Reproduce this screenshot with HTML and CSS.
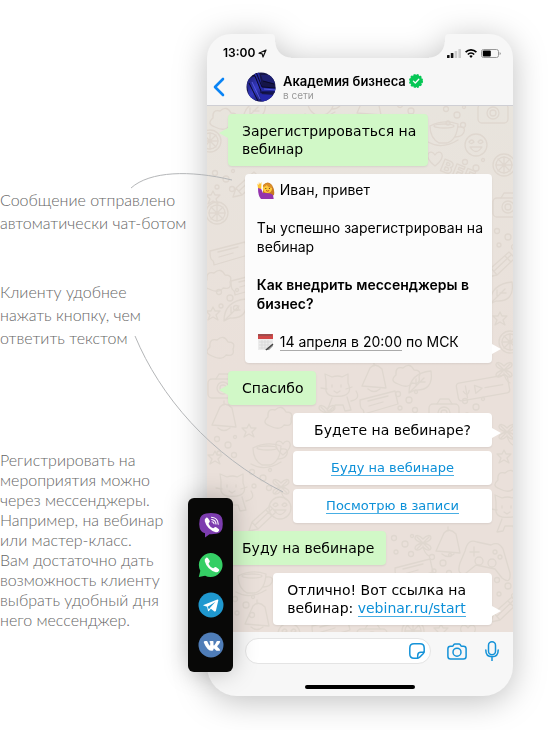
FILE: index.html
```html
<!DOCTYPE html>
<html lang="ru">
<head>
<meta charset="utf-8">
<meta name="viewport" content="width=device-width, initial-scale=1">
<title>Академия бизнеса</title>
<link rel="stylesheet" href="styles.css">
</head>
<body>
<main class="stage">
  <section class="notes">
    <p class="note">Сообщение отправлено<br>автоматически чат-ботом</p>
    <p class="note">Клиенту удобнее<br>нажать кнопку, чем<br>ответить текстом</p>
    <p class="note note-long">Регистрировать на<br>мероприятия можно<br>через мессенджеры.<br>Например, на вебинар<br>или мастер-класс.<br>Вам достаточно дать<br>возможность клиенту<br>выбрать удобный дня<br>него мессенджер.</p>
  </section>

  <div class="phone-wrap">
  <section class="phone">
    <div class="status">
      <div class="ear ear-left">
        <span class="time">13:00</span>
        <svg width="9" height="9" viewBox="0 0 9 9"><path d="M8 1 1 4.2l3.2.6L5 8z" fill="none" stroke="#111" stroke-width="1.2" stroke-linejoin="round"/></svg>
      </div>
      <div class="ear ear-right">
        <svg width="14" height="9" viewBox="0 0 14 9"><rect y="6" width="2.6" height="3" rx=".6" fill="#111"/><rect x="3.8" y="4" width="2.6" height="5" rx=".6" fill="#111"/><rect x="7.6" y="2" width="2.6" height="7" rx=".6" fill="#ccc"/><rect x="11.4" width="2.6" height="9" rx=".6" fill="#ccc"/></svg>
        <svg width="12" height="9" viewBox="0 0 12 9" fill="none" stroke="#000" stroke-width="1.7"><path d="M.6 3.2a7.6 7.6 0 0 1 10.8 0M2.8 5.5a4.6 4.6 0 0 1 6.4 0"/><path d="M6 8.9 4.3 7.1a2.4 2.4 0 0 1 3.4 0z" fill="#000" stroke="none"/></svg>
        <svg width="20" height="9" viewBox="0 0 20 9"><rect x=".5" y=".5" width="17" height="8" rx="2" fill="none" stroke="#999"/><rect x="1.8" y="1.6" width="8" height="5.8" rx="1" fill="#000"/><path d="M18.6 3v3q1.2-.5 1.2-1.5T18.6 3" fill="#999"/></svg>
      </div>
    </div>

    <header class="head">
      <button class="plain back" aria-label="Назад"><svg width="12" height="20" viewBox="0 0 12 20"><path d="m10 2-8 8 8 8" fill="none" stroke="#0a84f5" stroke-width="2.6" stroke-linecap="round" stroke-linejoin="round"/></svg></button>
      <svg class="avatar" width="30" height="30" viewBox="0 0 30 30">
        <defs><clipPath id="av"><circle cx="15" cy="15" r="14.5"/></clipPath><linearGradient id="blue" x1="0" y1="0" x2="1" y2="1"><stop offset="0" stop-color="#1a1a66"/><stop offset=".5" stop-color="#3438c0"/><stop offset="1" stop-color="#111150"/></linearGradient></defs>
        <g clip-path="url(#av)"><rect width="30" height="30" fill="#151548"/><path d="M0 8 9 4l10 26H4z" fill="url(#blue)"/><path d="m8 1 5-1 3 15 14 1v5l-15-1z" fill="#2529a0"/><path d="M15 3h15v9l-13-3z" fill="#1d1f70"/><path d="m13 22 17 1v4l-14 3z" fill="#2427a8"/><path d="m2 2 7 2 6 15M10 0l6 15 14 1M14 20h16M17 9l11 3M3 11l9 18" fill="none" stroke="#090927"/><path d="m6 10 8 17M18 17l12 1" stroke="#5158da" fill="none"/></g>
      </svg>
      <div class="who">
        <h1 class="name">Академия бизнеса
          <svg width="14" height="14" viewBox="0 0 14 14"><circle cx="7" cy="7" r="6.2" fill="#06c755"/><circle cx="7" cy="7" r="6.2" fill="none" stroke="#06c755" stroke-width="1.6" stroke-dasharray="2 1.25"/><path d="m4.4 7.1 1.9 1.9 3.5-3.8" fill="none" stroke="#fff" stroke-width="1.3" stroke-linecap="round" stroke-linejoin="round"/></svg>
        </h1>
        <p class="online">в сети</p>
      </div>
    </header>

    <div class="chat">
      <svg class="doodles" viewBox="0 0 306 526" preserveAspectRatio="xMidYMid slice" aria-hidden="true">
        <defs>
          <g id="cup"><path d="M0 4q14-7 28-2q-1 16-11 19H9Q0 16 0 4M28 5q8-1 6 5-2 5-9 5M-2 20q14 8 30-2"/><ellipse cx="14" cy="4" rx="10" ry="2"/></g>
          <g id="face"><circle cx="11" cy="11" r="11"/><path d="M5 13q6 9 12 0zM4 8q3-4 5 0-3 3-5 0M13 8q3-4 5 0-3 3-5 0"/></g>
          <path id="star" d="m6 0 2 4 5 0-4 4 2 5-5-3-5 3 2-5-4-4h5z"/>
          <path id="heart" d="M8 14C-6 3 4-4 8 3c4-7 14 0 0 11z"/>
          <path id="clover" d="M13 13C0 11 5 0 13 9c8-9 13 2 0 4 13 2 8 12 0 4-8 8-13-2 0-4m0 3q1 7 6 10M7 7l12 12M19 7 7 19"/>
          <g id="cat"><path d="M2 4 1-3l7 3q6-2 10 0l6-3v9q5 11-6 13-14 2-16-5zM8 21l-5 13 6-1 2-5 8 0 2 6 6-1-4-13M27 24q10-2 5-10"/><path d="M8 8v2m9-2v2m-7 4 3 2 3-2M-3 11l6 1m19 0 6-2"/></g>
          <path id="cloud" d="M5 18Q-4 15 3 9 2 0 10 2q7-6 11 2 8 0 5 7 2 8-7 6-4 6-14 1z"/>
          <g id="pencil"><path d="m0 20 3-9L21-5l6 6L9 18zM3 11l6 7M17-1l6 6M6 14 23-2"/></g>
          <g id="pad"><path d="M3 10Q6-3 15 1l14 3q8-4 12 4l7 24q1 12-8 5l-7-9-19-4-10 8q-10 3-6-10zM12 6v9m-4-4h9"/><circle cx="33" cy="11" r="2"/><circle cx="38" cy="16" r="2"/><circle cx="17" cy="20" r="4"/><circle cx="30" cy="22" r="4"/></g>
          <g id="ticket"><path d="m0 5 35-9 3 13L4 19q0-4-2-5t-2-9zM8 6l20-5M9 11l14-4"/></g>
          <g id="wheel"><circle cx="11" cy="11" r="11"/><circle cx="11" cy="11" r="8"/><path d="M11 3v16M3 11h16M5 5l12 12M17 5 5 17"/></g>
          <g id="camera"><rect x="0" y="4" width="30" height="19" rx="4"/><path d="m8 4 3-5h9l3 5"/><circle cx="15" cy="13" r="6"/><circle cx="15" cy="13" r="3"/></g>
          <path id="leaf" d="M0 22Q0 2 22 0q3 20-16 19zM0 22 15 7m-8 7V8m3 3h6"/>
          <g id="dots"><circle cx="3" cy="3" r="2.5"/><circle cx="14" cy="9" r="3"/><circle cx="5" cy="17" r="2"/><circle cx="21" cy="1" r="1.5"/><circle cx="20" cy="19" r="2.5"/></g>
          <g id="bell"><path d="m0 22 8-18q5-6 12 1l4 19zM12 2V-2m-6 27q6 5 12 0"/></g>
          <g id="voice"><rect width="52" height="18" rx="3"/><path d="m18 5 7 4-7 4zM28 9h18M9 4v7M6 9q3 7 6 0M9 13v3"/></g>
        </defs>
        <g class="ink">
          <use href="#wheel" x="-8" y="24"/><use href="#cloud" x="3" y="3"/><use href="#leaf" x="36" y="-6"/><use href="#cup" x="100" y="-12"/><use href="#bell" x="150" y="-15"/><use href="#dots" x="190" y="-4"/>
          <use href="#cup" x="223" y="16"/><use href="#face" x="258" y="28"/><use href="#camera" x="271" y="-6"/><use href="#heart" x="220" y="46"/><text x="232" y="64" transform="rotate(22 232 64)">BFF</text><use href="#dots" x="236" y="0"/><use href="#wheel" x="286" y="48"/><use href="#dots" x="255" y="53"/>
          <use href="#star" x="0" y="85"/><use href="#dots" x="5" y="64"/><use href="#pencil" x="26" y="71"/><use href="#wheel" x="-1" y="96"/><use href="#ticket" x="3" y="140"/><use href="#cloud" x="-3" y="165"/><use href="#ticket" x="24" y="170"/><use href="#star" x="0" y="201"/><use href="#leaf" x="17" y="193"/><use href="#dots" x="9" y="183"/><use href="#cloud" x="0" y="232"/><use href="#camera" x="1" y="269"/><use href="#bell" x="5" y="297"/><use href="#star" x="36" y="318"/><use href="#dots" x="7" y="330"/>
          <use href="#camera" x="286" y="88"/><use href="#dots" x="287" y="122"/><use href="#pencil" x="281" y="151"/><use href="#leaf" x="283" y="176"/><use href="#star" x="287" y="206"/><use href="#wheel" x="292" y="225"/><use href="#clover" x="284" y="251"/>
          <use href="#cat" x="117" y="271"/><use href="#clover" x="107" y="294"/><use href="#bell" x="155" y="258"/><use href="#cloud" x="186" y="260"/><use href="#leaf" x="202" y="265"/><use href="#voice" x="250" y="273" transform="rotate(-10 276 282)"/><use href="#ticket" x="153" y="289"/><use href="#camera" x="222" y="294"/><use href="#dots" x="255" y="292"/><use href="#dots" x="188" y="285"/>
          <use href="#cloud" x="58" y="302"/><use href="#cup" x="46" y="338"/><use href="#heart" x="68" y="335"/><use href="#star" x="2" y="345"/><use href="#cat" x="12" y="371"/><use href="#pencil" x="42" y="405"/><use href="#clover" x="61" y="368"/><use href="#dots" x="42" y="363"/><use href="#face" x="62" y="391"/>
          <use href="#clover" x="287" y="313"/><use href="#star" x="291" y="344"/><use href="#cloud" x="288" y="365"/><use href="#cat" x="287" y="392"/><use href="#pad" x="255" y="435"/><use href="#clover" x="203" y="424"/><use href="#bell" x="229" y="423"/><use href="#dots" x="184" y="429"/><use href="#ticket" x="188" y="457"/><use href="#dots" x="222" y="448"/>
          <use href="#cup" x="31" y="466"/><use href="#bell" x="38" y="496"/><use href="#dots" x="25" y="490"/><use href="#face" x="71" y="517"/><use href="#ticket" x="105" y="515"/><use href="#camera" x="150" y="519"/><use href="#wheel" x="195" y="514"/><use href="#star" x="228" y="518"/><use href="#pencil" x="284" y="496"/><use href="#dots" x="287" y="471"/><use href="#heart" x="253" y="519"/>
        </g>
      </svg>

      <p class="bubble sent">Зарегистрироваться на<br>вебинар</p>

      <div class="bubble got invite">
        <p><svg class="emoji" width="18" height="18" viewBox="0 0 18 18"><path d="M6 4Q11-1 15 4q3 5 2 10l-4 2-7-3z" fill="#c87922"/><circle cx="10.5" cy="7.5" r="4.6" fill="#ffc93b"/><path d="M5.8 6Q8 1 12 2.5q3 1 3.3 4.5-4 0-5.5-3Q8.5 6 5.800 6" fill="#dc8e28"/><circle cx="8.800" cy="7.500" r=".6" fill="#563414"/><circle cx="12.400" cy="7.500" r=".6" fill="#563414"/><path d="M9 9.500q1.700 1.300 3.200 0" fill="none" stroke="#a33b18" stroke-width=".8"/><path d="M1 7q3-1 3.200 1L6 12q8-.5 10 2l.7 4H4Q1 15 1 7" fill="#9433ad"/><path d="m1 7-.7-4.500L1.700 4 1.900.8l1 2.500L4.400 1v3.500L4.200 8z" fill="#ffc232"/></svg>Иван, привет</p>
        <p>Ты успешно зарегистрирован на<br>вебинар</p>
        <p><strong>Как внедрить мессенджеры в<br>бизнес?</strong></p>
        <p><svg class="emoji" width="18" height="18" viewBox="0 0 18 18"><path d="M1 3h15v10l-4 4H1z" fill="#ececec"/><path d="M1 1h15v5H1z" fill="#d14747"/><path d="M2 1v2m2-2v2m2-2v2m2-2v2m2-2v2m2-2v2m2-2v2" stroke="#555" stroke-width=".8"/><path d="M2 9h13M2 12h12M2 15h9M5 7v9m3-9v9m3-9v8" stroke="#d6d6d6" stroke-width=".7"/><path d="m8 17 8-6v2l-4 4z" fill="#999"/><path d="m9 17 7-6" stroke="#444" stroke-width="1.300"/></svg><span class="date">14 апреля в 20:00</span> по МСК</p>
      </div>

      <p class="bubble sent">Спасибо</p>

      <div class="choices">
        <p class="bubble got ask">Будете на вебинаре?</p>
        <a class="bubble choice" href="#yes"><span>Буду на вебинаре</span></a>
        <a class="bubble choice" href="#later"><span>Посмотрю в записи</span></a>
      </div>

      <p class="bubble sent">Буду на вебинаре</p>
      <p class="bubble got last">Отлично! Вот ссылка на<br>вебинар: <a class="link" href="#start">vebinar.ru/start</a></p>
    </div>

    <footer class="foot">
      <div class="tools">
        <div class="field">
          <input class="text" type="text" aria-label="Сообщение">
          <button class="plain" aria-label="Стикеры"><svg width="16" height="16" viewBox="0 0 16 16" class="line"><path d="M15.200 8.500V5Q15.200.800 11 .800H5Q.800.800.800 5v6q0 4.200 4.200 4.200h3.500q1.200 0 2.100-.9l3.500-3.600q.9-1 .9-2.200z"/><path d="M8.700 15v-2.600q0-3.200 3.200-3.200H15"/></svg></button>
        </div>
        <button class="plain" aria-label="Камера"><svg width="20" height="17" viewBox="0 0 20 17" class="line"><path d="M3.500 3.200h1.700q.7 0 1-.6l.6-1Q7.200.900 8 .900h4q.8 0 1.200.7l.6 1q.3.600 1 .600h1.700q2.600 0 2.600 2.600v7.400q0 2.800-2.600 2.800h-13Q.900 16 .900 13.200V5.800q0-2.600 2.600-2.600z"/><circle cx="10" cy="9.200" r="4"/></svg></button>
        <button class="plain" aria-label="Голосовое сообщение"><svg width="14" height="20" viewBox="0 0 14 20" class="line"><rect x="3.500" y=".8" width="7" height="13" rx="3.500"/><path d="M.800 9q0 6.800 6.200 6.800T13.200 9M7 16v3.800"/></svg></button>
      </div>
      <div class="home"></div>
    </footer>
  </section>

  <nav class="apps" aria-label="Мессенджеры">
    <a href="#viber" aria-label="Viber"><svg width="26" height="26" viewBox="0 0 26 26"><path d="M8 1.500Q13 .300 18 1.500q5.500 1 6.400 6 .8 4.500 0 8.500-1 5-6.400 5.800-3 .6-6.500.400L7 25.500v-4.200Q2.500 20 1.700 16q-.9-4.500 0-8.500Q2.700 2.500 8 1.500z" fill="#7d3daf"/><path id="tube" d="M8.200 5.700q1-.6 1.800.500l1.700 2.500q.5 1-.4 1.800-1 .8-.5 1.800 1.200 2.600 3.800 3.800.9.400 1.700-.5.800-1.100 1.900-.4l2.400 1.700q1 .8.400 1.800-1.200 2-3.200 1.600Q9 17.500 6.800 9.300q-.6-2.200 1.400-3.600z" fill="#fff"/><path d="M13.500 5.200q6.500.500 6.700 7M13.700 7.500q4 .500 4.300 4.500M14 9.700q1.800.1 2 2" fill="none" stroke="#fff" stroke-width="1.100" stroke-linecap="round"/></svg></a>
    <a href="#whatsapp" aria-label="WhatsApp"><svg width="26" height="26" viewBox="0 0 26 26"><path d="M12.500 1a12 12 0 1 1-5.400 22.700L.8 25l1.500-6.300A12 12 0 0 1 12.500 1z" fill="#35cf65"/><use href="#tube"/></svg></a>
    <a href="#telegram" aria-label="Telegram"><svg width="26" height="26" viewBox="0 0 26 26"><circle cx="13" cy="13" r="12.500" fill="#1f98cf"/><path d="m5.500 13 13.800-5.400q1.200-.3 1 1l-2.400 10.200q-.4 1.200-1.500.6l-3.500-2.600-2 2.300q-.8.600-1-.5l-.8-3.900-3.700-1.100q-.6-.3.100-.6z" fill="#fff"/><path d="m9.700 14.800 7.800-5-5.200 5.800-1.400 2z" fill="#1f98cf"/></svg></a>
    <a href="#vk" aria-label="ВКонтакте"><svg width="26" height="26" viewBox="0 0 26 26"><circle cx="13" cy="13" r="12.500" fill="#4f7db8"/><path d="M6.500 9h2.300q.4 0 .6.600.9 2.600 2.200 4 .5.400.6-.3V11q0-.8-.9-1.100.3-.9 1.200-.9h2.300q.7 0 .7.800v3.300q.2.700.8.100 1.200-1.400 2.100-3.500.3-.7.900-.7h2.200q.9 0 .6.900-.8 1.800-2.600 3.900-.5.700 0 1.200 1.900 1.600 2.500 2.700.4.900-.6 1.100h-2.300q-.6 0-1-.4l-1.700-1.600q-.8-.6-.9.300 0 1.700-1.200 1.700-5.100.2-8.500-8.400-.3-.9.700-1.100z" fill="#fff"/></svg></a>
  </nav>
  </div>

  <svg class="pointers" viewBox="0 0 548 731" preserveAspectRatio="xMinYMin meet" aria-hidden="true"><path d="M131 188C150 171 190 170 232 180M135 336C160 396 210 455 283 492"/></svg>
</main>
</body>
</html>
```
FILE: styles.css
```css
* { box-sizing: border-box; }

body {
  margin: 0;
  background: #fff;
  color: #000;
  font-family: "DejaVu Sans", sans-serif;
  font-size: 14px;
  line-height: 18px;
}

p, h1 { margin: 0; }

.stage {
  position: relative;
  display: grid;
  grid-template-columns: minmax(0, 207fr) minmax(0, 306fr) minmax(0, 35fr);
  padding: 34px 0;
  overflow: hidden;
}

.notes {
  display: flex;
  flex-direction: column;
  gap: 46px;
  padding-top: 154px;
  color: #666;
  font-family: Lato, "Open Sans", sans-serif;
  font-size: 16px;
  font-weight: 300;
  line-height: 23px;
  white-space: nowrap;
}

.note-long {
  margin-top: 55px;
  line-height: 20px;
}

.phone-wrap { position: relative; }

.phone { filter: drop-shadow(0 5px 16px rgba(0, 0, 0, .25)); }

.status {
  display: flex;
  justify-content: space-between;
}

.ear {
  position: relative;
  display: flex;
  align-items: center;
  width: 68px;
  height: 24px;
  padding-top: 14px;
  background: #f7f7f7;
}

.ear-left {
  gap: 3px;
  padding-left: 16px;
  border-radius: 30px 5px 0 0;
}

.ear-right {
  gap: 4px;
  padding-right: 12px;
  justify-content: flex-end;
  border-radius: 5px 30px 0 0;
}

.ear::after {
  content: "";
  position: absolute;
  bottom: 0;
  width: 16px;
  height: 16px;
}

.ear-left::after {
  left: 100%;
  background: radial-gradient(circle at 100% 0, transparent 15px, #f7f7f7 16px);
}

.ear-right::after {
  right: 100%;
  background: radial-gradient(circle at 0 0, transparent 15px, #f7f7f7 16px);
}

.time {
  font: 600 12px/12px Inter, sans-serif;
}

.head {
  display: flex;
  align-items: center;
  height: 48px;
  padding: 10px 6px 0;
  border-bottom: 1px solid #cfcfd4;
  background: #f7f7f7;
}

.plain {
  display: flex;
  padding: 0;
  border: 0;
  background: none;
}

.back { width: 33px; }

.who {
  padding-left: 7px;
  font-family: Inter, sans-serif;
}

.name {
  display: flex;
  align-items: center;
  gap: 3px;
  font-size: 13px;
  font-weight: 600;
  line-height: 16px;
}

.online {
  color: #999;
  font-size: 10px;
  line-height: 12px;
}

.chat {
  position: relative;
  display: flex;
  flex-direction: column;
  align-items: flex-end;
  gap: 8px;
  padding: 8px 21px 7px;
  background: linear-gradient(#e8e4dd, #eae0da 50%);
}

.doodles {
  position: absolute;
  inset: 0;
  width: 100%;
  height: 100%;
}

.ink {
  fill: none;
  stroke: #dfd7cf;
  stroke-width: 1.3;
  stroke-linejoin: round;
  stroke-linecap: round;
}

.ink text { font: bold 17px "DejaVu Sans", sans-serif; }

.bubble {
  position: relative;
  padding: 8px 14px;
  border-radius: 4px;
  background: #fff;
  box-shadow: 0 1px 2px rgba(0, 0, 0, .08);
}

.sent {
  align-self: flex-start;
  padding-right: 12px;
  background: #d1f8c7;
}

.sent::before,
.got::after {
  content: "";
  position: absolute;
  border: solid transparent;
  border-width: 5px 9px;
}

.sent::before {
  right: 100%;
  top: 14px;
  border-right-color: #d1f8c7;
  border-left-width: 0;
}

.got::after {
  left: 100%;
  bottom: 9px;
  border-left-color: #fff;
  border-right-width: 0;
}

.invite {
  display: flex;
  flex-direction: column;
  gap: 19px;
  padding: 6px 9px 12px 12px;
  background: #fcfcfc;
  font-family: Inter, sans-serif;
  line-height: 19px;
}

.invite strong { font-weight: 600; }

.last { padding-right: 26px; }

.emoji {
  margin-right: 5px;
  vertical-align: -4px;
}

.date { border-bottom: 1px solid #aaa; }

.choices {
  display: flex;
  flex-direction: column;
  gap: 4px;
  width: 199px;
  text-align: center;
}

.choice {
  font-size: 13px;
}

.choice,
.link {
  color: #0d90d8;
  text-decoration: none;
}

.choice span,
.link { border-bottom: 1px solid #48aee4; }

.foot {
  padding: 6px 14px 7px 38px;
  border-radius: 0 0 30px 30px;
  background: #f7f7f7;
}

.tools {
  display: flex;
  align-items: center;
  gap: 16px;
}

.tools > .plain + .plain { margin-left: 2px; }

.field {
  display: flex;
  flex: 1;
  align-items: center;
  min-width: 0;
  height: 26px;
  padding-right: 5px;
  border: 1px solid #e4e4e4;
  border-radius: 13px;
  background: #fff;
}

.text {
  flex: 1;
  min-width: 0;
  border: 0;
  background: none;
  outline: 0;
}

.line {
  fill: none;
  stroke: #1492d8;
  stroke-width: 1.5;
  stroke-linejoin: round;
  stroke-linecap: round;
}

.home {
  width: 110px;
  height: 4px;
  margin: 21px auto 0 60px;
  border-radius: 2px;
  background: #000;
}

.apps {
  position: absolute;
  left: -19px;
  bottom: 24px;
  display: flex;
  flex-direction: column;
  align-items: center;
  gap: 14px;
  width: 45px;
  padding: 14px 0;
  border-radius: 6px;
  background: #080807;
  box-shadow: 0 0 24px rgba(0, 0, 0, .25);
}

.apps a { display: flex; }

.pointers {
  position: absolute;
  inset: 0;
  width: 100%;
  pointer-events: none;
  fill: none;
  stroke: #b4b6b8;
  stroke-width: 1;
}
```
